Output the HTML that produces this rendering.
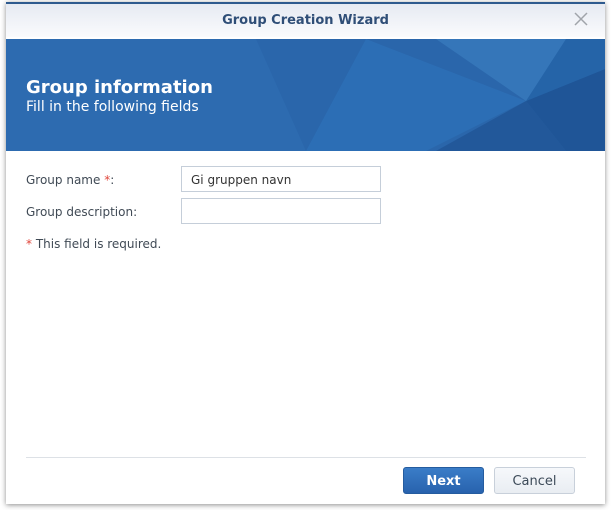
<!DOCTYPE html>
<html><head><style>
body{margin:0;width:612px;height:510px;background:#fff;position:relative;overflow:hidden;font-family:"DejaVu Sans","Liberation Sans",sans-serif;}
.win{position:absolute;left:6px;top:2px;width:599px;height:500px;background:#fff;box-shadow:0 1px 5px rgba(0,0,0,.45);border-top:2px solid #2e5a8e;}
.title{height:33px;background:linear-gradient(#e6eaf2,#fafbfd);text-align:center;line-height:33px;font-size:13px;font-weight:bold;color:#2f4e77;}
.x{position:absolute;right:17px;top:8px;}
.banner{position:absolute;top:35px;left:0;width:599px;height:112px;background:#2d6bb0;overflow:hidden;}
.h1{position:absolute;left:20px;top:38px;color:#fff;font-size:18px;font-weight:bold;}
.h2{position:absolute;left:20px;top:60px;color:#fff;font-size:14px;}
.lbl{position:absolute;font-size:12px;color:#404a55;}
.inp{position:absolute;left:175px;height:26px;border:1px solid #c5ced9;font-size:12px;color:#333;line-height:26px;padding-left:9px;box-sizing:border-box;width:200px;}
.btn{position:absolute;top:463px;height:27px;width:81px;border-radius:3px;font-size:13px;text-align:center;line-height:27px;box-sizing:border-box;}
</style></head><body>
<div class="win">
<div class="title">Group Creation Wizard</div>
<svg class="x" width="14" height="14"><path d="M1 1L13 13M13 1L1 13" stroke="#a0a4aa" stroke-width="1.5"/></svg>
<div class="banner">
<svg width="599" height="112" style="position:absolute;left:0;top:0">
<polygon points="250,0 599,0 599,112 300,112" fill="#2a66ab"/>
<polygon points="360,0 520,62 420,112 300,112" fill="#2d71b8" opacity=".8"/>
<polygon points="430,0 599,0 520,62" fill="#3a7dbf" opacity=".7"/>
<polygon points="520,62 599,30 599,112 560,112" fill="#1f5597"/>
<polygon points="520,62 430,112 560,112" fill="#22589a"/>
<polygon points="520,62 560,0 599,0 599,30" fill="#2564a8"/>
</svg>
<div class="h1">Group information</div>
<div class="h2">Fill in the following fields</div>
</div>
<div class="lbl" style="left:20px;top:169px">Group name <span style="color:#e0453a">*</span>:</div>
<div class="inp" style="top:162px">Gi gruppen navn</div>
<div class="lbl" style="left:20px;top:201px">Group description:</div>
<div class="inp" style="top:194px"></div>
<div class="lbl" style="left:20px;top:233px"><span style="color:#e0453a">*</span> This field is required.</div>
<div style="position:absolute;left:20px;top:453px;width:560px;height:1px;background:#dde1e6"></div>
<div class="btn" style="left:397px;background:linear-gradient(#3a7dc8,#2862ad);border:1px solid #255c9f;color:#fff;font-weight:bold">Next</div>
<div class="btn" style="left:488px;background:linear-gradient(#f6f8fb,#e9edf2);border:1px solid #c8d0da;color:#3c4a58">Cancel</div>
</div>
</body></html>
